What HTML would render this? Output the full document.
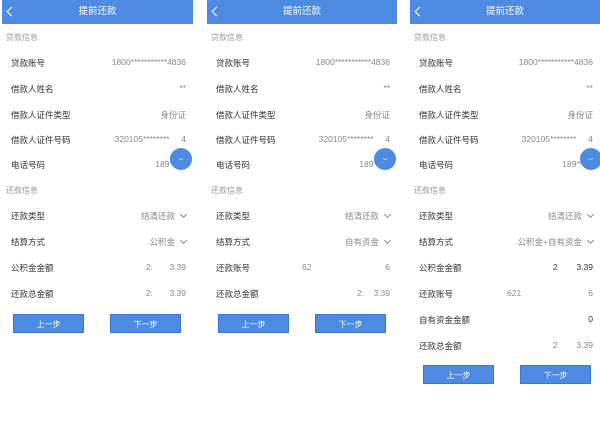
<!DOCTYPE html><html><head><meta charset="utf-8"><style>
*{margin:0;padding:0;box-sizing:border-box}
body{width:600px;height:421px;background:#fff;position:relative;overflow:hidden;font-family:"Liberation Sans","Noto Sans CJK SC",sans-serif}
.p{position:absolute;top:0;height:421px}
.h{position:absolute;top:0;left:0;right:0;height:24px;background:#4d8ae2;color:#fff;font-size:9.5px;text-align:center;line-height:24px}
.h i{position:absolute;left:6px;top:8px;width:7px;height:7px;border-left:1.5px solid #fff;border-bottom:1.5px solid #fff;transform:rotate(45deg)}
.s{position:absolute;left:4px;font-size:8px;color:#999}
.l{position:absolute;left:9px;font-size:8.5px;color:#333}
.v{position:absolute;right:7px;font-size:8.5px;color:#888;text-align:right}
.v.d{color:#333}
.c{display:inline-block;width:5px;height:5px;border-right:1px solid #888;border-bottom:1px solid #888;transform:rotate(45deg);margin-left:6px;position:relative;top:-2px}
.b{position:absolute;height:19px;width:71px;background:#4d8ae2;color:#fff;font-size:8px;text-align:center;line-height:19px;border:1px solid #3a78d0}
.e{position:absolute;width:22px;height:22px;border-radius:50%;background:#4d8ae2;color:#fff;font-size:8px;text-align:center;line-height:22px}
</style></head><body>

<div class="p" style="left:2px;width:191px">
<div class="h"><i></i>提前还款</div>
<div class="s" style="top:32px">贷款信息</div>
<div class="l" style="top:57px">贷款账号</div><div class="v" style="top:57px">1800***********4836</div>
<div class="l" style="top:83px">借款人姓名</div><div class="v" style="top:83px">**</div>
<div class="l" style="top:109px">借款人证件类型</div><div class="v" style="top:109px">身份证</div>
<div class="l" style="top:134px">借款人证件号码</div><div class="v" style="top:134px">320105********&nbsp;&nbsp;&nbsp;&nbsp;&nbsp;4</div>
<div class="l" style="top:159px">电话号码</div><div class="v" style="top:159px">189*****</div>
<div class="e" style="left:168px;top:148px">⌣</div>
<div class="s" style="top:185px">还款信息</div>
<div class="l" style="top:210px">还款类型</div><div class="v" style="top:210px">结清还款<span class="c"></span></div>
<div class="l" style="top:236px">结算方式</div><div class="v" style="top:236px">公积金<span class="c"></span></div>
<div class="l" style="top:262px">公积金金额</div><div class="v" style="top:262px">2:&nbsp;&nbsp;&nbsp;&nbsp;&nbsp;&nbsp;&nbsp;3.39</div>
<div class="l" style="top:288px">还款总金额</div><div class="v" style="top:288px">2:&nbsp;&nbsp;&nbsp;&nbsp;&nbsp;&nbsp;&nbsp;3.39</div>
<div class="b" style="left:11px;top:314px">上一步</div><div class="b" style="left:108px;top:314px">下一步</div>
</div>

<div class="p" style="left:207px;width:190px">
<div class="h"><i></i>提前还款</div>
<div class="s" style="top:32px">贷款信息</div>
<div class="l" style="top:57px">贷款账号</div><div class="v" style="top:57px">1800***********4836</div>
<div class="l" style="top:83px">借款人姓名</div><div class="v" style="top:83px">**</div>
<div class="l" style="top:109px">借款人证件类型</div><div class="v" style="top:109px">身份证</div>
<div class="l" style="top:134px">借款人证件号码</div><div class="v" style="top:134px">320105********&nbsp;&nbsp;&nbsp;&nbsp;&nbsp;4</div>
<div class="l" style="top:159px">电话号码</div><div class="v" style="top:159px">189*****</div>
<div class="e" style="left:167px;top:148px">⌣</div>
<div class="s" style="top:185px">还款信息</div>
<div class="l" style="top:210px">还款类型</div><div class="v" style="top:210px">结清还款<span class="c"></span></div>
<div class="l" style="top:236px">结算方式</div><div class="v" style="top:236px">自有资金<span class="c"></span></div>
<div class="l" style="top:262px">还款账号</div><div class="v" style="top:262px;left:95px;text-align:left">62</div><div class="v" style="top:262px">6</div>
<div class="l" style="top:288px">还款总金额</div><div class="v" style="top:288px">2:&nbsp;&nbsp;&nbsp;&nbsp;3.39</div>
<div class="b" style="left:11px;top:314px">上一步</div><div class="b" style="left:108px;top:314px">下一步</div>
</div>

<div class="p" style="left:410px;width:190px">
<div class="h"><i></i>提前还款</div>
<div class="s" style="top:32px">贷款信息</div>
<div class="l" style="top:57px">贷款账号</div><div class="v" style="top:57px">1800***********4836</div>
<div class="l" style="top:83px">借款人姓名</div><div class="v" style="top:83px">**</div>
<div class="l" style="top:109px">借款人证件类型</div><div class="v" style="top:109px">身份证</div>
<div class="l" style="top:134px">借款人证件号码</div><div class="v" style="top:134px">320105********&nbsp;&nbsp;&nbsp;&nbsp;&nbsp;4</div>
<div class="l" style="top:159px">电话号码</div><div class="v" style="top:159px">189*****</div>
<div class="e" style="left:170px;top:148px">⌣</div>
<div class="s" style="top:185px">还款信息</div>
<div class="l" style="top:210px">还款类型</div><div class="v" style="top:210px">结清还款<span class="c"></span></div>
<div class="l" style="top:236px">结算方式</div><div class="v" style="top:236px">公积金+自有资金<span class="c"></span></div>
<div class="l" style="top:262px">公积金金额</div><div class="v d" style="top:262px">2&nbsp;&nbsp;&nbsp;&nbsp;&nbsp;&nbsp;&nbsp;&nbsp;3.39</div>
<div class="l" style="top:288px">还款账号</div><div class="v" style="top:288px;left:97px;text-align:left">621</div><div class="v" style="top:288px">6</div>
<div class="l" style="top:314px">自有资金金额</div><div class="v d" style="top:314px">0</div>
<div class="l" style="top:340px">还款总金额</div><div class="v" style="top:340px">2&nbsp;&nbsp;&nbsp;&nbsp;&nbsp;&nbsp;&nbsp;&nbsp;3.39</div>
<div class="b" style="left:13px;top:365px">上一步</div><div class="b" style="left:110px;top:365px">下一步</div>
</div>
</body></html>
